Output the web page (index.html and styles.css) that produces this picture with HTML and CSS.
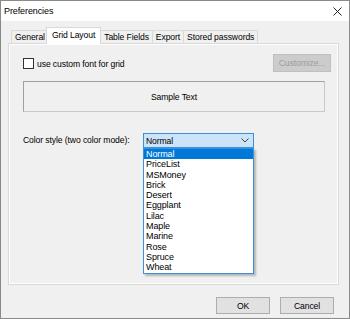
FILE: index.html
```html
<!DOCTYPE html>
<html>
<head>
<meta charset="utf-8" />
<title>Preferencies</title>
<link rel="stylesheet" href="styles.css">
</head>
<body>
<div class="window">
    <div class="titlebar">
        <span class="title">Preferencies</span>
        <svg class="close" width="9" height="9" viewBox="0 0 9 9"><path d="M0.5 0.5L8.5 8.5M8.5 0.5L0.5 8.5" stroke="#222" stroke-width="1" fill="none"/></svg>
    </div>
    <div class="content">
        <div class="tabs">
            <div class="tab">General</div>
            <div class="tab active">Grid Layout</div>
            <div class="tab">Table Fields</div>
            <div class="tab">Export</div>
            <div class="tab">Stored passwords</div>
        </div>
        <div class="panel">
            <div class="font-row">
                <label class="check"><span class="box"></span>use custom font for grid</label>
                <button class="btn disabled">Customize...</button>
            </div>
            <div class="sample">Sample Text</div>
            <div class="color-row">
                <span class="color-label">Color style (two color mode):</span>
                <div class="combo">
                    <span>Normal</span>
                    <svg class="chevron" width="8" height="5" viewBox="0 0 8 5"><path d="M0.5 0.5L4 4L7.5 0.5" stroke="#444" stroke-width="1" fill="none"/></svg>
                    <ul class="dropdown">
                        <li class="selected">Normal</li>
                        <li>PriceList</li>
                        <li>MSMoney</li>
                        <li>Brick</li>
                        <li>Desert</li>
                        <li>Eggplant</li>
                        <li>Lilac</li>
                        <li>Maple</li>
                        <li>Marine</li>
                        <li>Rose</li>
                        <li>Spruce</li>
                        <li>Wheat</li>
                    </ul>
                </div>
            </div>
        </div>
        <div class="buttons">
            <button class="btn ok">OK</button>
            <button class="btn cancel">Cancel</button>
        </div>
    </div>
</div>
</body>
</html>
```

FILE: styles.css
```css
body{
    margin: 0;
    font-family: "Liberation Sans", Arial, sans-serif;
    font-size: 8.6px;
    letter-spacing: -0.1px;
    color: #000;
}
.window{
    width: 350px;
    height: 319px;
    box-sizing: border-box;
    border: 1px solid #8a8a8a;
    background: #f0f0f0;
    display: flex;
    flex-direction: column;
}
.titlebar{
    height: 20px;
    background: #fff;
    display: flex;
    align-items: center;
    justify-content: space-between;
    padding: 0 7px 0 3px;
    font-size: 9px;
}
.close{
    margin-top: 1px;
}
.content{
    flex: 1;
    padding: 6px 10px 0 7px;
    display: flex;
    flex-direction: column;
}
.tabs{
    display: flex;
    align-items: flex-end;
    height: 16px;
    padding-left: 3px;
    position: relative;
    z-index: 1;
}
.tab{
    height: 13px;
    line-height: 13px;
    padding: 0 3px;
    border: 1px solid #d9d9d9;
    border-bottom: none;
    margin-right: -1px;
    box-sizing: border-box;
    background: #f0f0f0;
}
.tab.active{
    height: 17px;
    line-height: 14px;
    padding: 0 5px;
    margin: 0 -1px -1px -2px;
    background: #fff;
    position: relative;
}
.panel{
    height: 242px;
    box-sizing: border-box;
    border: 1px solid #d9d9d9;
    background: #f0f0f0;
    box-shadow: inset 1px 1px #fff, inset -1px -1px #fff;
    padding: 10px 7px 0 14px;
}
.font-row{
    display: flex;
    justify-content: space-between;
    align-items: center;
    height: 18px;
}
.check{
    display: flex;
    align-items: center;
    margin-top: 1px;
}
.box{
    width: 9px;
    height: 9px;
    border: 1px solid #333;
    background: #fff;
    margin-right: 3px;
}
.btn{
    font-family: inherit;
    font-size: 8.6px;
    letter-spacing: -0.1px;
    border: 1px solid #adadad;
    background: #e1e1e1;
    padding: 0;
    color: #000;
}
.btn.disabled{
    width: 58px;
    height: 18px;
    background: #cccccc;
    border-color: #bfbfbf;
    color: #9d9d9d;
}
.sample{
    margin: 9px 6px 0 0;
    height: 31px;
    box-sizing: border-box;
    border: 1px solid #a0a0a0;
    border-right-color: #c8c8c8;
    border-bottom-color: #c8c8c8;
    display: flex;
    align-items: center;
    justify-content: center;
}
.color-row{
    display: flex;
    align-items: center;
    margin-top: 21px;
}
.color-label{
    width: 120px;
    margin-top: -1px;
}
.combo{
    width: 111px;
    height: 15px;
    box-sizing: border-box;
    border: 1px solid #3c8fdb;
    background: #cce4f7;
    display: flex;
    align-items: center;
    justify-content: space-between;
    padding: 0 4px 0 2px;
    position: relative;
}
.dropdown{
    position: absolute;
    top: 14px;
    left: -1px;
    width: 111px;
    box-sizing: border-box;
    margin: 0;
    padding: 0;
    list-style-type: none;
    background: #fff;
    border: 1px solid #3c8fdb;
    box-shadow: 2px 2px 2px rgba(0,0,0,0.25);
}
.dropdown li{
    height: 10.3px;
    line-height: 10.3px;
    padding-left: 2px;
    font-size: 9px;
}
.dropdown li.selected{
    background: #0078d7;
    color: #fff;
}
.buttons{
    display: flex;
    justify-content: flex-end;
    gap: 10px;
    margin: 12px 5px 0 0;
}
.btn.ok, .btn.cancel{
    width: 54px;
    height: 17px;
}
```
